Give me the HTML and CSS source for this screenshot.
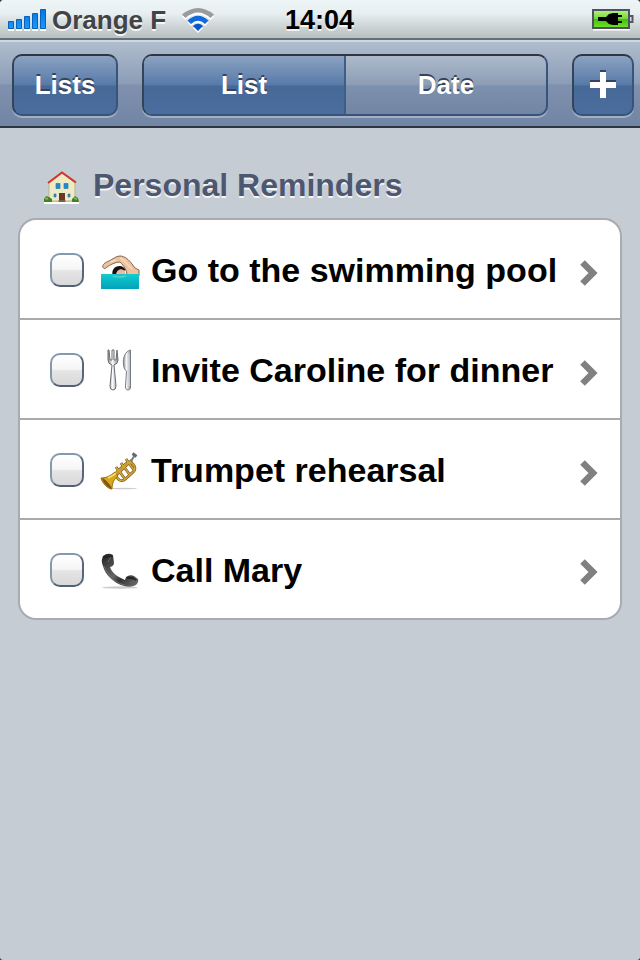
FILE: index.html
```html
<!DOCTYPE html>
<html lang="en">
<head>
<meta charset="utf-8">
<title>Reminders</title>
<link rel="stylesheet" href="styles.css">
</head>
<body>
<div class="screen">
  <header class="status">
    <div class="carrier">
      <svg class="signal" width="40" height="22" viewBox="0 0 40 22">
        <defs><linearGradient id="blue" x2="0" y2="1"><stop stop-color="#0873df"/><stop offset="1" stop-color="#1599ff"/></linearGradient></defs>
        <path d="M0 21h6m2 0h6m2 0h6m2 0h6m2 0h6" stroke="#fff" stroke-width="2"/>
        <g fill="url(#blue)" stroke="#0861bd"><path d="M.5 12.500h5v7h-5zM8.500 10.500h5v9h-5zM16.500 7.500h5v12h-5zM24.500 4.500h5v15h-5zM32.500 .5h5v19h-5z"/></g>
      </svg>
      <span class="network">Orange F</span>
      <svg class="wifi" width="34" height="26" viewBox="0 0 34 26">
        <g fill="#fff" transform="translate(0 2)"><path d="M0 6.500Q16-6.500 32 6.500L28.500 10Q16-1 3.500 10Z"/><path d="M5.500 12.500Q16 3 26.500 12.500L23 16Q16 9.500 9 16Z"/><path d="M11 18Q16 13.500 21 18L16 23Z"/></g>
        <path d="M0 6.500Q16-6.500 32 6.500L28.500 10Q16-1 3.500 10Z" fill="#999b9c"/>
        <path d="M5.500 12.500Q16 3 26.500 12.500L23 16Q16 9.500 9 16Z" fill="#1269dc"/>
        <path d="M11 18Q16 13.500 21 18L16 23Z" fill="#0754cb"/>
      </svg>
    </div>
    <time class="clock">14:04</time>
    <svg class="battery" width="43" height="23" viewBox="0 0 43 23">
      <defs><linearGradient id="charge" x2="0" y2="1"><stop stop-color="#b5f47d"/><stop offset=".48" stop-color="#77d63c"/><stop offset=".52" stop-color="#43bd0d"/><stop offset="1" stop-color="#72e52f"/></linearGradient></defs>
      <path d="M1 20.500h37" stroke="#fff" stroke-width="2"/>
      <path d="M38 7h2.500v6H38" fill="#d8dce0" stroke="#555967" stroke-width="2"/>
      <path d="M1 1h36v18H1z" fill="url(#charge)" stroke="#50515f" stroke-width="2"/>
      <path d="M6 8h8l3-3 4-1h5v2h4v2h-4v4h4v2h-4v2h-5l-4-1-3-3H6z" fill="#000"/>
    </svg>
  </header>
  <nav class="toolbar">
    <button class="button active lists">Lists</button>
    <div class="segments"><button class="segment active">List</button><button class="segment">Date</button></div>
    <button class="button active add" aria-label="Add"><svg width="26" height="28" viewBox="0 0 26 28"><path d="M10 0h6v10h10v6H16v10h-6V16H0v-6h10z" fill="#34445e"/><path d="M10 2h6v10h10v6H16v10h-6V18H0v-6h10z" fill="#fff"/></svg></button>
  </nav>
  <main>
    <h1 class="heading">
      <svg class="house" width="36" height="34" viewBox="0 0 36 34">
        <path d="M0 32h35" stroke="#fff" stroke-width="2"/>
        <path d="M5 12 18 2l13 10v18H5z" fill="#eeeac6" stroke="#bbb58d"/>
        <path d="M4 12 18 1.500 32 11.500" fill="none" stroke="#d53325" stroke-width="2"/>
        <path d="M12 12.500h4v5h-4zM20 12.500h4v5h-4zM10 23h2v3h-2zM24 23h2v3h-2z" fill="#168edc" stroke="#347a9d" stroke-width=".7"/>
        <path d="M15 22h6v9h-6z" fill="#663a24"/><path d="M14 30h8" stroke="#947c69"/>
        <path d="M0 31v-3l2-3 3 1 3 2v3zM28 31v-3l3-3 3 2 1 4z" fill="#437f27"/><path d="M1 27l3 1m26-1 3 1" stroke="#79b744" stroke-width="2"/>
      </svg>
      <span>Personal Reminders</span>
    </h1>
    <ul class="list">
      <li class="row">
        <i class="check"></i>
        <svg class="icon" width="40" height="44" viewBox="0 0 40 44">
          <defs><linearGradient id="water" x2="0" y2="1"><stop stop-color="#17cbd0"/><stop offset=".45" stop-color="#08b9c4"/><stop offset="1" stop-color="#04a1ba"/></linearGradient></defs>
          <path d="M3 19.500c-1-3 2-5 6-6.500 4-2 7-5 11-5 5 0 9 4 12 8l3 4 4 2v6H27c0-6-3-10-7-14-5 0-10 3-13 5-2 2-3 2-4 .5z" fill="#edc29d" stroke="#755846" stroke-width=".9"/>
          <path d="M20 10c5 2 7 7 12 11M10 14l6-2" stroke="#f9dbbb" stroke-width="1.500" fill="none"/>
          <path d="M12.500 27c-1-5 2-9 7-9 3 0 5 2 6 4l-9 5z" fill="#111"/>
          <path d="M16 27c0-6 7-8 9-3l1 3z" fill="#f5b6a0"/>
          <path d="M1 26h38v15H1z" fill="url(#water)"/><path d="M13 28q6 2 13 0" stroke="#50d2cc" stroke-width="1.500" fill="none"/>
        </svg>
        <span class="label">Go to the swimming pool</span>
        <svg class="arrow" width="19" height="26" viewBox="0 0 19 26"><path d="M2.500 2.500 13 13 2.500 23.500" fill="none" stroke="#808080" stroke-width="6.500"/></svg>
      </li>
      <li class="row">
        <i class="check"></i>
        <svg class="icon" width="40" height="44" viewBox="0 0 40 44">
          <defs><linearGradient id="metal"><stop stop-color="#8a8d91"/><stop offset=".45" stop-color="#fafbfc"/><stop offset="1" stop-color="#8b9198"/></linearGradient></defs>
          <path d="M8 2 8 12q0 4 4 5l-2 21q0 4 3 4t3-4l-2-21q4-1 4-5L17 2l-1 10h-2V2h-2v10h-2L9 2z" fill="url(#metal)" stroke="#696c71"/>
          <path d="M30.500 2c-5 1-8 8-7 14 0 3 1 6 3 7l-1 16c0 4 5 4 5 0z" fill="url(#metal)" stroke="#777c83"/><path d="M29 6v32" stroke="#d9dee4"/>
        </svg>
        <span class="label">Invite Caroline for dinner</span>
        <svg class="arrow" width="19" height="26" viewBox="0 0 19 26"><path d="M2.500 2.500 13 13 2.500 23.500" fill="none" stroke="#808080" stroke-width="6.500"/></svg>
      </li>
      <li class="row">
        <i class="check"></i>
        <svg class="icon" width="40" height="44" viewBox="0 0 40 44">
          <ellipse class="shadow" cx="24" cy="40.500" rx="13" ry=".8"/>
          <g fill="none" stroke="#765018" stroke-width="2.800"><path d="M12 31 32 12"/><rect x="15" y="18" width="21" height="11" rx="5" transform="rotate(-42 25.500 23.500)"/><path d="m16 19 9 12m-4-16 9 12m-4-16 8 11"/></g>
          <g fill="none" stroke="#cda73a" stroke-width="1.600"><path d="M12 31 32 12"/><rect x="15" y="18" width="21" height="11" rx="5" transform="rotate(-42 25.500 23.500)"/><path d="m16 19 9 12m-4-16 9 12m-4-16 8 11"/></g>
          <path d="m31 13 4-6" stroke="#777b87" stroke-width="2"/><path d="m32.500 5.500 4 3" stroke="#646875" stroke-width="3"/>
          <path d="M1 30c6 0 9-2 14-6l3 4c-4 3-6 7-6 13-4 0-10-6-11-11z" fill="#d7a71f" stroke="#9b6b0c"/><path d="M2 30c3 1 9 7 10 11-4-1-9-6-10-11z" fill="#805411"/><path d="M8 30q5-2 8-5" stroke="#ffe66c" stroke-width="1.500" fill="none"/>
        </svg>
        <span class="label">Trumpet rehearsal</span>
        <svg class="arrow" width="19" height="26" viewBox="0 0 19 26"><path d="M2.500 2.500 13 13 2.500 23.500" fill="none" stroke="#808080" stroke-width="6.500"/></svg>
      </li>
      <li class="row last">
        <i class="check"></i>
        <svg class="icon" width="40" height="44" viewBox="0 0 40 44">
          <defs><linearGradient id="phone" x2="1" y2="1"><stop stop-color="#222"/><stop offset=".5" stop-color="#666"/><stop offset=".65" stop-color="#333"/><stop offset="1" stop-color="#777"/></linearGradient></defs>
          <ellipse class="shadow" cx="20" cy="39.500" rx="18" ry="1.200"/>
          <g transform="translate(0 2)"><path d="M3 6q5-4 10-1l1 8q0 3-4 4c2 6 8 10 15 13l1-3q4-3 8-1l4 3q1 3-2 6-5 3-12 1C14 33 5 25 3 16 1 11 2 9 3 6z" fill="url(#phone)"/>
          <path d="M4 16c4 10 11 17 21 19" stroke="#707070" fill="none"/><path d="M4 8q4-3 8-1m15 21q4-1 9 2" stroke="#222" stroke-width="2" fill="none"/><path d="m8 12 3-5m19 26 5-3" stroke="#686868" fill="none"/></g>
        </svg>
        <span class="label">Call Mary</span>
        <svg class="arrow" width="19" height="26" viewBox="0 0 19 26"><path d="M2.500 2.500 13 13 2.500 23.500" fill="none" stroke="#808080" stroke-width="6.500"/></svg>
      </li>
    </ul>
  </main>
</div>
</body>
</html>
```
FILE: styles.css
```css
* { box-sizing: border-box; }
body { margin: 0; background: #2e3238; font-family: "Liberation Sans", Arial, sans-serif; font-weight: bold; }
.screen { height: 960px; background: #c5ccd4; border-radius: 4px 4px 3px 3px; overflow: hidden; }
.status { height: 40px; display: grid; grid-template-columns: 284px 1fr 43px; padding: 0 5px 0 8px; background: linear-gradient(#edf5f8, #e8eff1 35%, #bbc2c4 95%); border-bottom: 2px solid #646e73; }
.carrier { display: flex; }
.signal { margin-top: 9px; }
.network { width: 130px; margin-left: 4px; color: #424346; font-size: 26px; line-height: 40px; text-shadow: 0 2px #f4f6f7; white-space: nowrap; }
.wifi { margin-top: 8px; }
.clock { margin-left: -7px; font-size: 27px; line-height: 40px; text-shadow: 0 2px #f0f3f4; }
.battery { margin-top: 9px; }
.toolbar { height: 88px; display: flex; padding: 12px 6px 0 12px; background: linear-gradient(#b0bdce, #8b9cb6 50%, #7f91ae 51%, #7185a4); border-top: 2px solid #cdd7e3; border-bottom: 2px solid #2d3642; }
button { padding: 0; margin: 0; font: bold 26px "Liberation Sans", Arial, sans-serif; color: #fff; text-shadow: 0 -2px #35445b; }
.button, .segments { height: 62px; border: 2px solid #39547c; border-top-color: #2d3642; border-left-color: #344458; border-radius: 10px; box-shadow: 0 2px #a2b0c5; }
.active { background: linear-gradient(#8ca2c2, #587ba9 49%, #476998 52%, #4b6d9d); }
.lists { width: 106px; }
.segments { width: 406px; margin: 0 24px; display: flex; overflow: hidden; background: linear-gradient(#aebacb, #8c9db5 49%, #7c91ad 52%, #7286a4); }
.segment { border: 0; flex: 1; background: transparent; }
.segment:first-child { border-right: 2px solid #405d88; flex: 0 0 202px; }
.segment.active { background: linear-gradient(#8ca2c2, #587ba9 49%, #476998 52%, #4b6d9d); }
.add { width: 62px; display: flex; align-items: center; justify-content: center; padding-bottom: 2px; }
main { padding: 38px 18px 0; }
.heading { display: flex; height: 52px; margin: 0; padding: 4px 0 0 26px; font-size: 32px; line-height: 38px; color: #4d576f; text-shadow: 0 2px #f3f5f7; }
.house { margin: 1px 13px 0 0; }
.heading span { margin-top: -4px; }
.list { list-style: none; margin: 0; padding: 0; border: 2px solid #aaabaf; border-radius: 18px; background: #fff; overflow: hidden; }
.row { height: 100px; display: flex; align-items: center; padding: 2px 21px 0 30px; border-bottom: 2px solid #aaa; }
.row.last { height: 98px; border-bottom: 0; }
.check { width: 34px; height: 34px; border: 2px solid #8498b0; border-right-color: #576779; border-bottom-color: #526175; border-radius: 10px; background: linear-gradient(#fff, #f5f5f5 48%, #e5e5e5 52%, #d9d9d9); }
.icon { margin: 0 0 0 16px; flex: none; }
.label { flex: 1; padding-left: 11px; font-size: 34px; line-height: 40px; white-space: nowrap; }
.arrow { margin-top: 5px; flex: none; }
.last .arrow { margin-top: 3px; }
.shadow { fill: #ccc; }
```
